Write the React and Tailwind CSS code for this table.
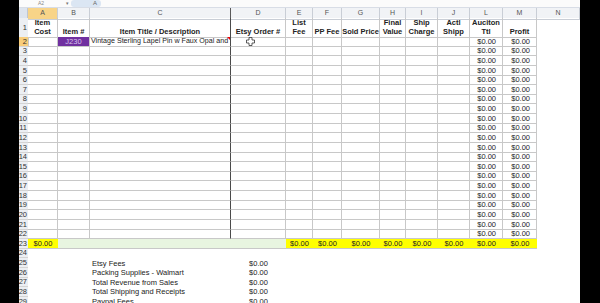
import React from "react";

const gridCols =
  "grid grid-cols-[9px_30px_32px_141px_55px_27px_29px_38px_26px_32px_32px_33px_34px_43px]";

const letters = ["A", "B", "C", "D", "E", "F", "G", "H", "I", "J", "L", "M", "N"];

const labels = [
  ["Item", "Cost"],
  ["Item #"],
  ["Item Title / Description"],
  ["Etsy Order #"],
  ["List", "Fee"],
  ["PP Fee"],
  ["Sold Price"],
  ["Final", "Value"],
  ["Ship", "Charge"],
  ["Actl", "Shipp"],
  ["Auciton", "Ttl"],
  ["Profit"],
  [],
];

const summary = [
  "Etsy Fees",
  "Packing Supplies - Walmart",
  "Total Revenue from Sales",
  "Total Shipping and Receipts",
  "Paypal Fees",
];

const RowHead = ({ n, active }) => (
  <div
    className={`flex items-center justify-end overflow-hidden whitespace-nowrap pr-[1px] text-[7.5px] text-[#333] border-b border-[#d4d4d4] ${
      active ? "bg-[#f8cd7a]" : "bg-[#eceff3]"
    }`}
  >
    <span className="shrink-0">{n}</span>
  </div>
);

const Cell = ({ children, className = "" }) => (
  <div
    className={`flex items-center overflow-hidden whitespace-nowrap border-r border-b border-[#c8c8c8] text-[7.5px] text-[#222] ${className}`}
  >
    {children}
  </div>
);

const Money = () => <span className="w-full text-right pr-[6px]">$0.00</span>;

const Cursor = () => (
  <svg width="9" height="9" viewBox="0 0 9 9" className="ml-[15px]">
    <path
      d="M3 0.5h3v2.5h2.5v3H6v2.5H3V6H0.5V3H3z"
      fill="#fff"
      stroke="#333"
      strokeWidth="0.8"
    />
  </svg>
);

export default function App() {
  const dataRows = Array.from({ length: 21 }, (_, i) => i + 2);

  return (
    <div className="w-[600px] h-[303px] bg-black flex overflow-hidden font-['Liberation_Sans',Arial,sans-serif]">
      <div className="w-[19px] shrink-0 bg-black" />

      <div className="w-[561px] shrink-0 bg-white flex flex-col">
        {/* Formula bar */}
        <div className="h-[8px] flex items-center border-b border-[#d8dde6] bg-[#fbfbfb] text-[5px] text-[#888]">
          <span className="ml-[19px] w-[28px]">A2</span>
          <span className="text-[5px] text-[#777]">▾</span>
          <div className="ml-[2px] h-[7px] w-[30px] rounded-[3px] bg-[#dbe6f3] flex items-center justify-end pr-[4px] text-[6px] text-[#666]">
            A
          </div>
        </div>

        {/* Column letters */}
        <div className={`${gridCols} h-[10px] bg-[#f1f3f6]`}>
          <div className="border-r border-b border-[#bfc6d1] bg-[#dde4ee]" />
          {letters.map((l) => (
            <div
              key={l}
              className={`flex items-center justify-center text-[7px] text-[#555] border-r border-b border-[#c9ced6] ${
                l === "A" ? "bg-[#f8d488]" : ""
              } ${l === "C" ? "border-r-[#5a5a5a]" : ""}`}
            >
              {l}
            </div>
          ))}
        </div>

        {/* Header labels */}
        <div className={`${gridCols} h-[19px]`}>
          <RowHead n={1} />
          {labels.map((lines, i) => (
            <div
              key={i}
              className={`flex flex-col items-center justify-end pb-[1px] text-[7.5px] font-bold leading-[9px] text-[#222] whitespace-nowrap ${
                i < 12 ? "border-r border-b border-[#c8c8c8]" : ""
              } ${i === 2 ? "border-r-[#4a4a4a]" : ""}`}
            >
              {lines.map((t) => (
                <span key={t}>{t}</span>
              ))}
            </div>
          ))}
        </div>

        {/* Data rows */}
        <div className={`${gridCols} auto-rows-[9.64px]`}>
          {dataRows.map((r) => (
            <React.Fragment key={r}>
              <RowHead n={r} active={r === 2} />
              <Cell className={r === 2 ? "border border-[#222] bg-white" : ""} />
              <Cell className={r === 2 ? "bg-[#7030a0] justify-center" : ""}>
                {r === 2 && <span className="text-[#d9c6ec]">J230</span>}
              </Cell>
              <Cell className="relative border-r-[#4a4a4a]">
                {r === 2 && (
                  <>
                    <span className="pl-[1px] text-[7.1px] text-[#222]">
                      Vintage Sterling Lapel Pin w Faux Opal and
                    </span>
                    <span className="absolute top-0 right-0 w-0 h-0 border-t-[3px] border-l-[3px] border-t-[#e00] border-l-transparent" />
                  </>
                )}
              </Cell>
              <Cell>{r === 2 && <Cursor />}</Cell>
              <Cell />
              <Cell />
              <Cell />
              <Cell />
              <Cell />
              <Cell />
              <Cell>
                <Money />
              </Cell>
              <Cell>
                <Money />
              </Cell>
              <div />
            </React.Fragment>
          ))}

          {/* Totals row */}
          <RowHead n={23} />
          <div className="flex items-center justify-center bg-[#ffff00] text-[7.5px] text-[#222] border-b border-[#c8c8c8]">
            $0.00
          </div>
          <div className="col-span-3 bg-[#e8f5e0] border-b border-[#c8c8c8]" />
          {Array.from({ length: 8 }).map((_, i) => (
            <div
              key={i}
              className="flex items-center justify-center bg-[#ffff00] text-[7.5px] text-[#222] border-b border-[#c8c8c8]"
            >
              $0.00
            </div>
          ))}
          <div />

          {/* Summary rows */}
          {[24, 25, 26, 27, 28, 29, 30].map((r, i) => {
            const label = summary[i - 1];
            return (
              <React.Fragment key={r}>
                <RowHead n={r} />
                <div />
                <div />
                <div className="flex items-center pl-[2px] text-[7.5px] text-[#222] whitespace-nowrap">
                  {label}
                </div>
                <div className="flex items-center justify-center text-[7.5px] text-[#222]">
                  {label ? "$0.00" : ""}
                </div>
                <div className="col-span-9" />
              </React.Fragment>
            );
          })}
        </div>
      </div>

      <div className="w-[20px] shrink-0 bg-black" />
    </div>
  );
}
